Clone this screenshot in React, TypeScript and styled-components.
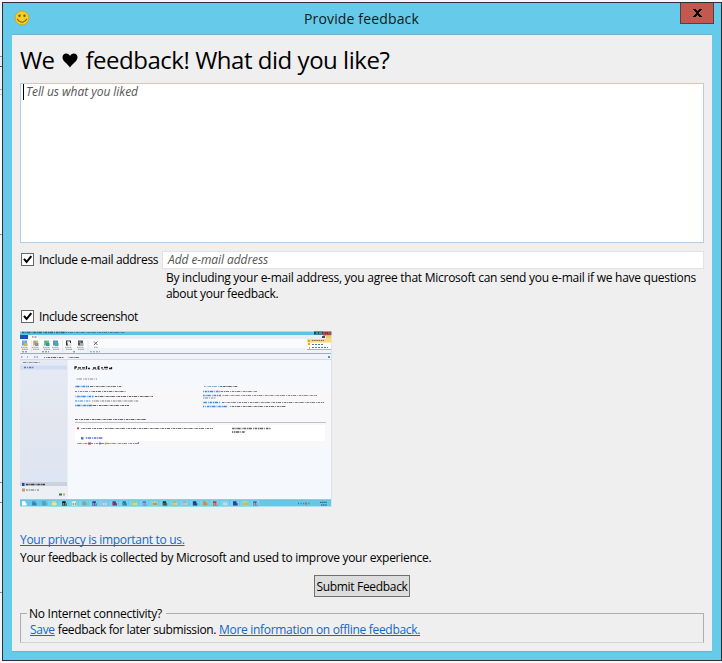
import React from 'react';
import styled, { createGlobalStyle } from 'styled-components';

const GlobalStyle = createGlobalStyle`
  * { box-sizing: border-box; }
  body { margin: 0; background: #f6f8fb; overflow: hidden; }
`;

const Desktop = styled.div`
  display: flex;
  width: 722px;
  height: 663px;
  padding: 2px 0 2px 0;
  background: #f4f6fb;
  font: 12px/16px "Open Sans", "Noto Sans", sans-serif;
  color: #000;
`;

const Gutter = styled.div`
  flex: 0 0 2px;
  background: linear-gradient(#eef5f8 0 54px, #8e9194 54px 55px, #e9ebee 55px 64px, #505256 64px 65px,
    #f1f1f3 65px 87px, #a9abad 87px 88px, #f6f6f8 88px 92px, #c9cbcd 92px 93px, #fdfdfe 93px 232px,
    #8c8e91 232px 233px, #f2f5fb 233px 480px, #84878b 480px 481px, #f3f5fa 481px 500px,
    #84878b 500px 501px, #f3f5fa 501px 590px, #8e9194 590px 591px, #f6f4fd 591px);
`;

const Dialog = styled.section`
  display: flex;
  flex-direction: column;
  flex: 1;
  height: 659px;
  border: 1px solid #2b3037;
  background: #66cbea;
`;

const TitleBar = styled.header`
  display: grid;
  grid-template-columns: 40px 1fr 41px;
  height: 31px;
`;

const TitleIcon = styled.svg`
  width: 16px;
  height: 16px;
  margin: 7px 0 0 11px;
`;

const Title = styled.h1`
  margin: 0;
  font-size: 14px;
  font-weight: 400;
  line-height: 31px;
  letter-spacing: 0.15px;
  text-align: center;
  color: #10191d;
`;

const CloseButton = styled.button`
  display: flex;
  align-items: center;
  justify-content: center;
  width: 34px;
  height: 21px;
  padding: 0;
  border: 1px solid #613a3c;
  border-top: 0;
  background: #c3584f;
`;

const Body = styled.main`
  display: flex;
  flex-direction: column;
  width: 700px;
  height: 618px;
  margin-left: 9px;
  padding: 0 8px;
  border-top: 1px solid #6fb1cc;
  border-bottom: 1px solid #6fb1cc;
  background: #efefef;
`;

const Text = styled.span<{ $ls: number }>`
  letter-spacing: ${(p) => p.$ls}px;
  white-space: pre;
`;

const Heading = styled.h2`
  display: flex;
  align-items: center;
  margin: 0;
  height: 48px;
  padding-top: 2px;
  font-size: 24px;
  font-weight: 400;
  line-height: 50px;
  white-space: pre;
`;

const Heart = styled.svg`
  width: 16px;
  height: 15px;
  margin: 1px 7px 0 8px;
`;

const CommentBox = styled.div`
  display: flex;
  height: 160px;
  padding-left: 2px;
  border: 1px solid #b4cfe4;
  background: #fff;
`;

const Caret = styled.i`
  width: 1px;
  height: 16px;
  margin-right: 2px;
  background: #000;
`;

const Placeholder = styled.em`
  color: #555;
  line-height: 16px;
`;

const Row = styled.div`
  display: flex;
  align-items: flex-start;
`;

const EmailRow = styled(Row)`
  margin-top: 8px;
  height: 18px;
`;

const ScreenshotRow = styled(Row)`
  margin-top: 6px;
  height: 16px;
`;

const CheckLabel = styled.label`
  display: flex;
  width: 142px;
  padding-left: 1px;
  gap: 5px;
  line-height: 18px;
`;

const CheckMark = styled.svg`
  flex: none;
  width: 13px;
  height: 13px;
  margin-top: 2px;
`;

const EmailInput = styled.div`
  flex: 1;
  height: 18px;
  padding-left: 5px;
  border: 1px solid #e2e3ea;
  background: #fff;
`;

const Consent = styled.p`
  display: flex;
  flex-direction: column;
  margin: 1px 0 0 146px;
`;

const Thumbnail = styled.svg`
  flex: none;
  width: 312px;
  height: 176px;
  margin-top: 7px;
`;

const Link = styled.a<{ $ls: number }>`
  letter-spacing: ${(p) => p.$ls}px;
  color: #1068c8;
  text-decoration: underline;
  text-underline-offset: 1px;
  text-decoration-thickness: 1px;
  text-decoration-skip-ink: none;
  white-space: pre;
`;

const Privacy = styled.div`
  display: flex;
  flex-direction: column;
  align-items: flex-start;
  gap: 2px;
  margin-top: 25px;
`;

const Submit = styled.button`
  align-self: center;
  width: 96px;
  height: 22px;
  margin: 9px 0 8px;
  padding: 1px 0 0;
  border: 1px solid #707070;
  background: #dddddd;
  font: inherit;
  color: #000;
`;

const Offline = styled.fieldset`
  height: 38px;
  margin: 0;
  padding: 0 0 0 6px;
  border: 1px solid #aeaeae;
  border-bottom-color: #d5d5d5;
`;

const Legend = styled.legend`
  height: 16px;
  padding: 0 4px 0 2px;
  line-height: 18px;
`;

const OfflineText = styled.div`
  display: flex;
  gap: 3px;
  padding: 1px 0 0 3px;
`;

const Checkbox = () => (
  <CheckMark viewBox="0 0 13 13">
    <rect x=".5" y=".5" width="12" height="12" fill="#fff" stroke="#666" />
    <path d="M3 5.8 5.6 9 10.3 3.1" fill="none" stroke="#000" strokeWidth="2" />
  </CheckMark>
);

type Smudge = [x: number, y: number, w: number, color: string, weight?: number];

const smudges: Smudge[] = [
  [2, 1.5, 44, '#2d5361', 1.3], [46, 1.5, 59, '#3f7182', 1],
  [56, 48, 21, '#777', 1],
  [55, 55.5, 14, '#1b6fc9', 1.5], [70, 55.5, 32, '#555', 1.2],
  [55, 60.5, 13, '#1b86e9', 1.2], [69, 60.5, 37, '#555', 1.2],
  [55, 65.5, 19, '#1b76d9', 1.4], [74, 65.5, 59, '#444', 1.2],
  [55, 70, 16, '#1b76d9', 1.2], [72, 70, 47, '#666', 1.2],
  [55, 74.5, 17, '#086fd8', 1.6], [72, 74.5, 37, '#444', 1.2],
  [55, 88.5, 71, '#444', 1.2],
  [184, 55.5, 18, '#5998cf', 1], [200, 55.5, 18, '#444', 1.2],
  [183, 60.5, 17, '#1b76d9', 1.3], [200, 60.5, 37, '#666', 1.2],
  [183, 64.5, 18, '#1b86e9', 1.5], [202, 64.5, 95, '#777', 1.2], [183, 67, 13, '#777', 1],
  [183, 71.5, 18, '#1b76d9', 1.4], [202, 71.5, 102, '#666', 1.2],
  [183, 75.5, 25, '#1b76d9', 1.4], [209, 75.5, 57, '#555', 1.2],
  [61, 97.5, 132, '#555', 1.2], [212, 97.5, 39, '#444', 1.3], [212, 101, 13, '#333', 1.4],
  [65, 107, 18, '#3854dc', 1.5], [57, 112.5, 61, '#777', 1.2],
  [3, 31.5, 17, '#777', 1], [4, 36.5, 10, '#4f5fac', 1.4],
  [24, 26.5, 20, '#444', 1.2], [48, 26.5, 12, '#555', 1.2],
  [5, 153.5, 20, '#222', 1.5], [6, 159, 13, '#555', 1.2],
];

const ribbonIcons: [number, string, string][] = [
  [2, '#58aee4', '#dbb14c'], [13, '#d9b45c', '#7b93aa'], [24, '#75c46d', '#3d8dbc'],
  [33, '#5296c7', '#4ba7a0'], [46, '#333', '#ddd'], [58, '#555', '#a5aeb3'],
];

const taskColors = [
  '#fff', '#3d8ecb', '#3da0d8', '#f0d273', '#161616', '#eff0bd', '#68b3ae', '#343f91', '#aab8d5', '#80306e',
  '#1677c4', '#b8c753', '#517ece', '#dfc94f', '#113d40', '#ccb150', '#9eafb7', '#163a83', '#d98b48',
  '#b93b42', '#a5d0e4', '#233aa3', '#d8cf5c', '#4d65a5',
];

const Capture = () => (
  <Thumbnail viewBox="0 0 312 176">
    <defs>
      <linearGradient id="side" x2="0" y2="1">
        <stop stopColor="#e4eaf4" />
        <stop offset=".45" stopColor="#e3e6ef" />
        <stop offset="1" stopColor="#dce6f3" />
      </linearGradient>
    </defs>
    <rect width="312" height="176" fill="#f5f8fd" />
    <rect x="48" y="55" width="263" height="62" fill="#f8f8fb" />
    <rect y=".5" width="312" height="3.5" fill="#5bc4e3" />
    <rect y="4" width="312" height="4" fill="#e9eef4" />
    <rect y="4" width="8" height="4" fill="#1954ac" />
    <rect x="9" y="4" width="9" height="4" fill="#fff" />
    <path d="M12 6h5" stroke="#555" strokeDasharray="1 .5" />
    <rect y="8" width="312" height="14" fill="#fafbfd" />
    <rect y="17" width="312" height="5" fill="#eff2f6" />
    <rect y="22" width="312" height="1.2" fill="#a7acb3" />
    <rect y="23.2" width="312" height="5" fill="#f0f3f9" />
    <rect y="28" width="312" height="1" fill="#d4d9e3" />
    <rect y="29" width="47" height="136" fill="url(#side)" />
    <rect y="34.5" width="47" height="4" fill="#cfdef5" />
    <path d="M47.5 29v137" stroke="#e9edf5" />
    {ribbonIcons.map(([x, a, b]) => (
      <g key={x}>
        <path d={`M${x} 9.5h5v5h-5z`} fill={a} />
        <path d={`M${x + 2} 12h3.5v3h-3.5zM${x + 1} 10.5h2v1h-2z`} fill={b} />
        <path d={`M${x - 1} 16.300h7M${x} 18.300h6`} stroke="#777" strokeWidth=".8" strokeDasharray="1.5 .7" />
      </g>
    ))}
    <path d="M47.500 10.500h2.500v3h-2.500z" fill="#f7f9fa" />
    <path d="M74 10.500l3.500 3.500M77.500 10.500l-3.500 3.500" stroke="#555" strokeWidth=".9" />
    <path d="M74 16.300h4" stroke="#777" strokeWidth=".8" strokeDasharray="1.5 .7" />
    <path d="M11.500 9v12M42.500 9v12M68 9v12" stroke="#dce1e7" strokeWidth=".7" />
    <path d="M2 20.800h6M22 20.800h7M53 20.800h3" stroke="#777" strokeDasharray="2 1" />
    <path d="M70 20.800h10" stroke="#55a5dc" strokeDasharray="2 1" />
    <path d="M1 26h2M7 26h1M14 26h5" stroke="#477cac" strokeDasharray="1.5 1" />
    <path d="M294 .5h9v3h-9z" fill="#1d4957" />
    <path d="M296 2h2M299 2h3" stroke="#86cad8" />
    <rect x="303" y=".5" width="8" height="4" fill="#ba4649" />
    <path d="M305 2h4" stroke="#481313" strokeDasharray="1 1" />
    <path d="M302 6h3" stroke="#394874" strokeWidth="2" />
    <rect x="306" y="4.500" width="5" height="3" fill="#f4cc55" />
    <rect x="287" y="8" width="25" height="11" fill="#fff" />
    <rect x="287" y="8" width="25" height="3.500" fill="#ffd868" />
    <path d="M287 18.500h25" stroke="#aeb4b9" />
    <path d="M288 10h2M288 13h2M289 17h1" stroke="#e5a817" strokeWidth="2" />
    <path d="M292 9.500h12" stroke="#8e702c" strokeDasharray="1.500 .7" />
    <path d="M292 13.500h12M292 16.500h16" stroke="#4779a3" strokeDasharray="2 1" />
    <rect x="308" y="25" width="2" height="2" fill="#3598d4" />
    <path
      d="M55 35.300v3M55 36h2M58 36.800h3M62 36.800h3M66.500 35v3.300M68 37.500h2M73 37h3M77.500 37.300h1M79.500 35.500c-2 0-2 2.500 0 2.500M81 36.800h2M84 36.500h4M89 37.500h2M91.500 36v2.300"
      fill="none"
      stroke="#222"
      strokeWidth="1.300"
    />
    <path d="M57 38.300h9M72 38.300h8M82 38.300h6" stroke="#555" strokeWidth=".7" strokeDasharray="2 .8" />
    <rect x="55" y="91" width="251" height="1" fill="#bfc0c3" />
    <rect x="55" y="94" width="250" height="16" fill="#fff" />
    <path d="M57 96.500h2v1.800h-2z" fill="#d62d3d" />
    <path d="M61 106h2.500v2.500H61z" fill="#547c9e" />
    <path d="M68 111.500h3v2h-3z" fill="#d83d36" />
    <path d="M79 111.500h2v2h-2zM118 111h1v2h-1z" fill="#5596d2" />
    <path d="M85 111.500h2v2h-2z" fill="#ebbd44" />
    <path d="M0 151h47v4H0z" fill="#cbd2db" />
    <path d="M0 155h47v13H0z" fill="#eceff4" />
    <path d="M2 152h2.500v3H2z" fill="#2447b2" />
    <path d="M2 157.500h3v3H2z" fill="#c89976" />
    <path d="M39 162.500h3v2h-3z" fill="#30743d" />
    <path d="M43 162.500h2v2h-2z" fill="#dba936" />
    {smudges.map(([x, y, w, color, weight = 1], i) => (
      <path
        key={i}
        d={`M${x} ${y}h${w}`}
        stroke={color}
        strokeWidth={weight}
        strokeOpacity=".85"
        strokeDasharray="2.500 .8 1.200 .6 3.400 1.100 .8 .9"
        strokeDashoffset={i * 1.3}
      />
    ))}
    <rect y="168.500" width="312" height="7" fill="#62c9e8" />
    <path d="M0 169h312" stroke="#7bb8cb" />
    {taskColors.map((c, i) => (
      <g key={i}>
        {i > 2 && <path d={`M${i * 10.1 - 2} 169.500h9v6h-9z`} fill="#7ed3ec" />}
        <path d={`M${2 + i * 10.05} 170.300h3.500v2h1v2.200h-4.500z`} fill={c} />
        <path
          d={`M${2.5 + i * 10.05} 173h4`}
          stroke={['#e8f7fb', '#435b9a', '#9a9c63', '#f5fbff'][i % 4]}
          strokeDasharray="1.500 .7"
        />
      </g>
    ))}
    <path d="M278 172.500h13" stroke="#38758b" strokeWidth="1.500" strokeDasharray="1 1.600" />
    <path d="M285 171.500h2v2h-2z" fill="#dc5954" />
    <path d="M300 171.300h7M301 174h6" stroke="#225366" strokeDasharray="1.500 .6" />
    <path d="M311.500 4v172" stroke="#dce2e9" />
  </Thumbnail>
);

export default function App() {
  return (
    <>
      <GlobalStyle />
      <Desktop>
        <Gutter />
        <Dialog>
          <TitleBar>
            <TitleIcon viewBox="0 0 16 16">
              <circle cx="8" cy="8" r="7" fill="#fbd01c" stroke="#c29a35" strokeWidth=".8" />
              <circle cx="5.500" cy="5.800" r="1.200" fill="#60584a" />
              <circle cx="10.500" cy="5.800" r="1.200" fill="#60584a" />
              <path d="M3 8.800q5 7 10 0" fill="none" stroke="#7a6322" strokeWidth="1.100" />
            </TitleIcon>
            <Title>Provide feedback</Title>
            <CloseButton aria-label="Close">
              <svg width="9" height="8" viewBox="0 0 9 8">
                <path
                  d="M0 0h3v1h1v1h1V1h1V0h3v1H8v1H7v1H6v2h1v1h1v1h1v1H6V7H5V6H4v1H3v1H0V7h1V6h1V5h1V3H2V2H1V1H0z"
                  fill="#000"
                />
              </svg>
            </CloseButton>
          </TitleBar>
          <Body>
            <Heading>
              <Text $ls={-0.6}>We</Text>
              <Heart viewBox="0 0 16 15">
                <path d="M8 14.500C6 11 .5 8.500.5 4.300.5 2 2.200.5 4.200.5 6 .5 7.400 1.600 8 3 8.600 1.600 10 .5 11.800.5c2 0 3.700 1.500 3.700 3.800C15.500 8.500 10 11 8 14.500z" />
              </Heart>
              <Text $ls={-0.47}>feedback! What did you like?</Text>
            </Heading>
            <CommentBox>
              <Caret />
              <Placeholder>
                <Text $ls={-0.04}>Tell us what you liked</Text>
              </Placeholder>
            </CommentBox>
            <EmailRow>
              <CheckLabel>
                <Checkbox />
                <Text $ls={-0.31}>Include e-mail address</Text>
              </CheckLabel>
              <EmailInput>
                <Placeholder>
                  <Text $ls={-0.08}>Add e-mail address</Text>
                </Placeholder>
              </EmailInput>
            </EmailRow>
            <Consent>
              <Text $ls={-0.264}>
                By including your e-mail address, you agree that Microsoft can send you e-mail if we have questions
              </Text>
              <Text $ls={-0.32}>about your feedback.</Text>
            </Consent>
            <ScreenshotRow>
              <CheckLabel>
                <Checkbox />
                <Text $ls={-0.38}>Include screenshot</Text>
              </CheckLabel>
            </ScreenshotRow>
            <Capture />
            <Privacy>
              <Link $ls={-0.3}>Your privacy is important to us.</Link>
              <Text $ls={-0.285}>Your feedback is collected by Microsoft and used to improve your experience.</Text>
            </Privacy>
            <Submit>
              <Text $ls={-0.32}>Submit Feedback</Text>
            </Submit>
            <Offline>
              <Legend>
                <Text $ls={-0.26}>No Internet connectivity?</Text>
              </Legend>
              <OfflineText>
                <Link $ls={-0.3}>Save</Link>
                <Text $ls={-0.35}>feedback for later submission.</Text>
                <Link $ls={-0.31}>More information on offline feedback.</Link>
              </OfflineText>
            </Offline>
          </Body>
        </Dialog>
      </Desktop>
    </>
  );
}
